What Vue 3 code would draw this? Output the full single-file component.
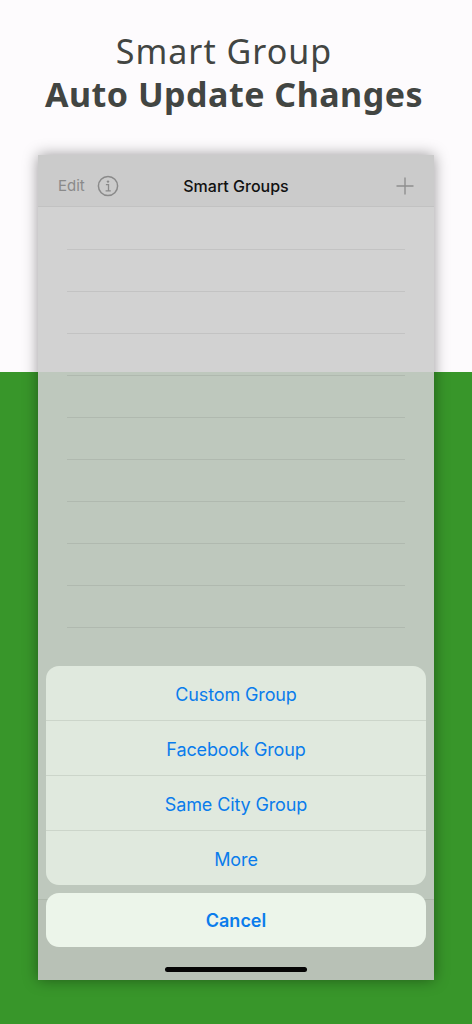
<template>
  <div class="page-root">
    <div class="headline">
      <div class="headline-light">Smart Group</div>
      <div class="headline-bold">Auto Update Changes</div>
    </div>

    <div class="phone">
      <!-- nav bar -->
      <div class="nav-bar">
        <div class="nav-left">
          <span class="nav-edit">Edit</span>
          <svg class="info-icon" width="22" height="22" viewBox="0 0 22 22" fill="none">
            <circle cx="11" cy="11" r="9.6" stroke="#8a8a8a" stroke-width="1.5" />
            <circle cx="11" cy="6.6" r="1.2" fill="#8a8a8a" />
            <path d="M8.9 9.7H11.5V15.6M8.6 15.9H13.8" stroke="#8a8a8a" stroke-width="1.3" />
          </svg>
        </div>
        <span class="nav-title">Smart Groups</span>
        <div class="nav-right">
          <svg class="plus-icon" width="18" height="18" viewBox="0 0 18 18" fill="none">
            <path d="M9 0.5V17.5M0.5 9H17.5" stroke="#8f8f8f" stroke-width="1.4" />
          </svg>
        </div>
      </div>

      <!-- empty rows -->
      <div class="list">
        <div v-for="n in rowCount" :key="n" class="list-row"></div>
      </div>

      <!-- toolbar behind the sheet -->
      <div class="toolbar"></div>

      <!-- action sheet -->
      <div class="sheet">
        <div class="sheet-group">
          <div v-for="item in actions" :key="item" class="sheet-item">{{ item }}</div>
        </div>
        <div class="sheet-cancel">Cancel</div>
      </div>

      <div class="home-bar"></div>
    </div>
  </div>
</template>

<script setup>
const rowCount = 10

const actions = ['Custom Group', 'Facebook Group', 'Same City Group', 'More']
</script>

<style>
body {
  margin: 0;
}
</style>

<style scoped>
.page-root {
  width: 472px;
  height: 1024px;
  overflow: hidden;
  padding-top: 30px;
  box-sizing: border-box;
  background: linear-gradient(to bottom, #fdfbfd 0, #fdfbfd 372px, #38962a 372px, #38962a 100%);
}

/* ===== Headline ===== */
.headline {
  height: 125px;
  padding-right: 4px;
  text-align: center;
  color: #424542;
  font-family: "Noto Sans", sans-serif;
  font-size: 34px;
  line-height: 43px;
  letter-spacing: 1px;
}

.headline-light {
  padding-right: 20px;
}

.headline-bold {
  font-weight: 700;
  letter-spacing: 0.5px;
}

/* ===== Phone ===== */
.phone {
  position: relative;
  width: 396px;
  height: 825px;
  margin-left: 38px;
  background: rgba(205, 205, 205, 0.9);
  box-shadow: 0 0 14px rgba(0, 0, 0, 0.4);
  font-family: Inter, "Liberation Sans", sans-serif;
}

.nav-bar {
  height: 41px;
  padding: 10px 20px 0;
  display: flex;
  align-items: center;
  justify-content: space-between;
  background: #cbcbcb;
  border-bottom: 1px solid #c2c2c2;
}

.nav-left {
  display: flex;
  align-items: center;
  gap: 12px;
  width: 76px;
}

.nav-right {
  display: flex;
  justify-content: flex-end;
  width: 76px;
}

.nav-edit {
  font-size: 15px;
  color: #8a8a8a;
}

.nav-title {
  font-size: 16px;
  font-weight: 500;
  color: #111;
}

/* ===== List ===== */
.list {
  padding: 1px 29px 0;
}

.list-row {
  height: 41px;
  border-bottom: 1px solid rgba(0, 0, 0, 0.07);
}

.toolbar {
  position: absolute;
  left: 0;
  right: 0;
  bottom: 0;
  height: 80px;
  border-top: 1px solid #aeb8ac;
  background: #b8c1b6;
}

/* ===== Action sheet ===== */
.sheet {
  position: absolute;
  left: 8px;
  right: 8px;
  top: 511px;
  display: flex;
  flex-direction: column;
  gap: 8px;
  text-align: center;
  color: #0a7cec;
  font-size: 18px;
}

.sheet-group {
  background: #e0e9de;
  border-radius: 13px;
  overflow: hidden;
  letter-spacing: -0.12px;
}

.sheet-item {
  height: 54px;
  line-height: 57px;
  border-bottom: 1px solid #ccd5ca;
}

.sheet-item:last-child {
  border-bottom: none;
}

.sheet-cancel {
  height: 54px;
  line-height: 56px;
  background: #ecf5ea;
  border-radius: 13px;
  font-weight: 600;
}

.home-bar {
  position: absolute;
  left: 127px;
  bottom: 8px;
  width: 142px;
  height: 5px;
  border-radius: 3px;
  background: #050505;
}
</style>
